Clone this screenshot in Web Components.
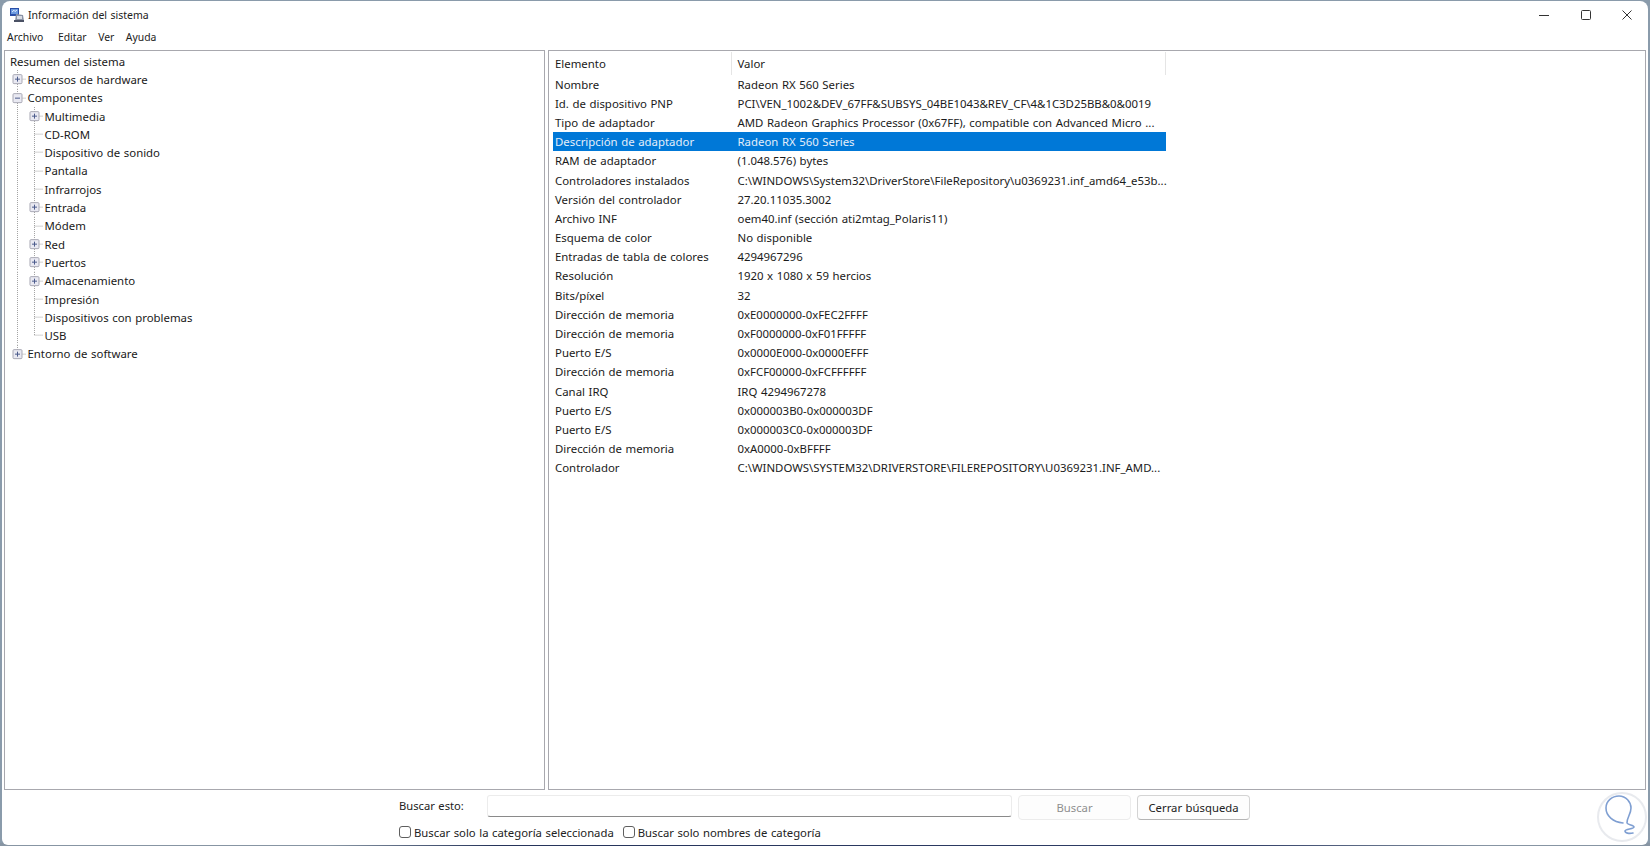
<!DOCTYPE html>
<html lang="es">
<head>
<meta charset="utf-8">
<title>Información del sistema</title>
<style>
  html, body { height: 100%; }
  body {
    margin: 0;
    overflow: hidden;
    background: linear-gradient(90deg, #8795a3 0, #8795a3 20%, #26345a 30%, #2f3d66 75%, #8795a3 90%) bottom / 100% 3px no-repeat, #8a9bab;
    font: 11.4px "Noto Sans", "Open Sans", sans-serif;
    word-spacing: .6px;
    color: #1a1a1a;
  }
</style>
</head>
<body>
<app-window>
  <title-bar slot="title">Información del sistema</title-bar>
  <menu-bar slot="menu" items="Archivo,Editar,Ver,Ayuda"></menu-bar>
  <tree-view slot="tree"></tree-view>
  <list-view slot="list"></list-view>
  <search-bar slot="search"></search-bar>
  <water-mark slot="mark"></water-mark>
</app-window>

<script>
class AppWindow extends HTMLElement {
  constructor() {
    super();
    this.attachShadow({ mode: 'open' });
    this.shadowRoot.innerHTML = `
      <style>
        :host {
          display: flex;
          flex-direction: column;
          position: relative;
          box-sizing: border-box;
          height: 844.5px;
          padding: 1px 2px 0 1.5px;
        }
        main {
          flex: 1;
          display: flex;
          flex-direction: column;
          min-height: 0;
          background: #fff;
          border-radius: 8px 8px 6px 6px;
        }
        #panes {
          flex: 1;
          min-height: 0;
          display: grid;
          grid-template-columns: 541px 1fr;
          column-gap: 3px;
          padding: 0 2px 0 2.5px;
        }
      </style>
      <main>
        <slot name="title"></slot>
        <slot name="menu"></slot>
        <div id="panes">
          <slot name="tree"></slot>
          <slot name="list"></slot>
        </div>
        <slot name="search"></slot>
      </main>
      <slot name="mark"></slot>
    `;
  }
}

class TitleBar extends HTMLElement {
  constructor() {
    super();
    this.attachShadow({ mode: 'open' });
    this.shadowRoot.innerHTML = `
      <style>
        :host {
          display: flex;
          align-items: center;
          height: 27px;
          padding-left: 7.5px;
          font-size: 10.5px;
          color: #222;
        }
        #logo { width: 16px; height: 16px; margin-right: 3px; flex: none; }
        #text { flex: 1; }
        #controls { display: flex; }
        #controls div { width: 41.5px; height: 27px; display: flex; align-items: center; justify-content: center; }
        #controls svg { width: 12px; height: 12px; fill: none; stroke: #333; stroke-width: 1; }
      </style>
      <svg id="logo" viewBox="0 0 16 16">
        <rect x="1" y="1" width="9" height="8" fill="#2a4fa8"/>
        <rect x="2" y="2" width="7" height="5" fill="#6d9be0"/>
        <path d="M3 5 L5 3.2 L6 4.6 L8 3" stroke="#e9f1ff" stroke-width=".9" fill="none"/>
        <path d="M7 7 L14 8 L15 14 L6 14 Z" fill="#8b93a6"/>
        <rect x="8" y="9" width="5" height="3" fill="#d8dce4"/>
        <rect x="5" y="13" width="10" height="2" fill="#4a5164"/>
      </svg>
      <span id="text"><slot></slot></span>
      <div id="controls">
        <div><svg viewBox="0 0 12 12"><path d="M1 6.5H11"/></svg></div>
        <div><svg viewBox="0 0 12 12"><rect x="1.5" y="1.5" width="9" height="9" rx="1"/></svg></div>
        <div><svg viewBox="0 0 12 12"><path d="M1.5 1.5L10.5 10.5M10.5 1.5L1.5 10.5"/></svg></div>
      </div>
    `;
  }
}

class MenuBar extends HTMLElement {
  constructor() {
    super();
    this.attachShadow({ mode: 'open' });
    const items = this.getAttribute('items').split(',');
    this.shadowRoot.innerHTML = `
      <style>
        :host {
          display: flex;
          align-items: center;
          box-sizing: border-box;
          height: 22px;
          padding: 0 0 5px 5.5px;
          gap: 11.5px;
          font-size: 10.4px;
          color: #222;
        }
        span:first-of-type { margin-right: 3px; }
      </style>
      ${items.map(item => `<span>${item}</span>`).join('')}
    `;
  }
}

const TREE = [
  { label: 'Resumen del sistema', level: -1, cont: [] },
  { label: 'Recursos de hardware', level: 0, box: 'plus', cont: [0] },
  { label: 'Componentes', level: 0, box: 'minus', cont: [0] },
  { label: 'Multimedia', level: 1, box: 'plus', cont: [0, 1] },
  { label: 'CD-ROM', level: 1, cont: [0, 1] },
  { label: 'Dispositivo de sonido', level: 1, cont: [0, 1] },
  { label: 'Pantalla', level: 1, cont: [0, 1] },
  { label: 'Infrarrojos', level: 1, cont: [0, 1] },
  { label: 'Entrada', level: 1, box: 'plus', cont: [0, 1] },
  { label: 'Módem', level: 1, cont: [0, 1] },
  { label: 'Red', level: 1, box: 'plus', cont: [0, 1] },
  { label: 'Puertos', level: 1, box: 'plus', cont: [0, 1] },
  { label: 'Almacenamiento', level: 1, box: 'plus', cont: [0, 1] },
  { label: 'Impresión', level: 1, cont: [0, 1] },
  { label: 'Dispositivos con problemas', level: 1, cont: [0, 1] },
  { label: 'USB', level: 1, cont: [0], last: true },
  { label: 'Entorno de software', level: 0, box: 'plus', cont: [], last: true },
];

class TreeRow extends HTMLElement {
  constructor() {
    super();
    this.attachShadow({ mode: 'open' });
  }

  set data(node) {
    const gutter = 17 * (node.level + 1);
    const h = 18.3;
    const mid = h / 2;
    let marks = '';
    for (const col of node.cont) {
      const x = 8.5 + 17 * col;
      marks += `<path d="M${x} 0V${h}" class="dot"/>`;
    }
    if (node.level >= 0) {
      const x = 8.5 + 17 * node.level;
      if (node.last) marks += `<path d="M${x} 0V${mid}" class="dot"/>`;
      marks += `<path d="M${x} ${mid}H${x + 9}" class="dot"/>`;
      if (node.box) {
        const bar = node.box === 'plus' ? `<path d="M${x} ${mid - 2.5}V${mid + 2.5}" class="sign"/>` : '';
        marks += `<rect x="${x - 4.5}" y="${mid - 4.5}" width="9" height="9" rx="1" class="box"/>
          <path d="M${x - 2.5} ${mid}H${x + 2.5}" class="sign"/>${bar}`;
      }
    }
    this.shadowRoot.innerHTML = `
      <style>
        :host { display: flex; height: ${h}px; align-items: center; white-space: nowrap; }
        svg { flex: none; display: block; }
        .dot { stroke: #a3a3a3; stroke-width: 1; stroke-dasharray: 1 1; fill: none; }
        .box { fill: #e9e9f2; stroke: #a9a9b5; stroke-width: 1; }
        .sign { stroke: #4a5a8c; stroke-width: 1; fill: none; }
        span { margin-left: ${node.level >= 0 ? 1.5 : 1}px; }
      </style>
      ${node.level >= 0 ? `<svg width="${gutter}" height="${h}" viewBox="0 0 ${gutter} ${h}">${marks}</svg>` : ''}
      <span>${node.label}</span>
    `;
  }
}

class TreeView extends HTMLElement {
  constructor() {
    super();
    this.attachShadow({ mode: 'open' });
    this.shadowRoot.innerHTML = `
      <style>
        :host {
          display: block;
          box-sizing: border-box;
          height: 100%;
          background: #fff;
          border: 1.5px solid #a8a8ae;
          padding: 1px 0 0 4px;
          overflow: hidden;
        }
      </style>
    `;
    for (const node of TREE) {
      const row = document.createElement('tree-row');
      row.data = node;
      this.shadowRoot.append(row);
    }
  }
}

const ROWS = [
  ['Nombre', 'Radeon RX 560 Series'],
  ['Id. de dispositivo PNP', 'PCI\\VEN_1002&DEV_67FF&SUBSYS_04BE1043&REV_CF\\4&1C3D25BB&0&0019'],
  ['Tipo de adaptador', 'AMD Radeon Graphics Processor (0x67FF), compatible con Advanced Micro ...'],
  ['Descripción de adaptador', 'Radeon RX 560 Series', true],
  ['RAM de adaptador', '(1.048.576) bytes'],
  ['Controladores instalados', 'C:\\WINDOWS\\System32\\DriverStore\\FileRepository\\u0369231.inf_amd64_e53b...'],
  ['Versión del controlador', '27.20.11035.3002'],
  ['Archivo INF', 'oem40.inf (sección ati2mtag_Polaris11)'],
  ['Esquema de color', 'No disponible'],
  ['Entradas de tabla de colores', '4294967296'],
  ['Resolución', '1920 x 1080 x 59 hercios'],
  ['Bits/píxel', '32'],
  ['Dirección de memoria', '0xE0000000-0xFEC2FFFF'],
  ['Dirección de memoria', '0xF0000000-0xF01FFFFF'],
  ['Puerto E/S', '0x0000E000-0x0000EFFF'],
  ['Dirección de memoria', '0xFCF00000-0xFCFFFFFF'],
  ['Canal IRQ', 'IRQ 4294967278'],
  ['Puerto E/S', '0x000003B0-0x000003DF'],
  ['Puerto E/S', '0x000003C0-0x000003DF'],
  ['Dirección de memoria', '0xA0000-0xBFFFF'],
  ['Controlador', 'C:\\WINDOWS\\SYSTEM32\\DRIVERSTORE\\FILEREPOSITORY\\U0369231.INF_AMD...'],
];

class ListView extends HTMLElement {
  constructor() {
    super();
    this.attachShadow({ mode: 'open' });
    const esc = text => text.replace(/&/g, '&amp;');
    this.shadowRoot.innerHTML = `
      <style>
        :host {
          display: block;
          box-sizing: border-box;
          height: 100%;
          background: #fff;
          border: 1.5px solid #a8a8ae;
          padding: 1px 0 0 4px;
          overflow: hidden;
        }
        #grid { width: 613px; }
        .row {
          display: grid;
          grid-template-columns: 178.5px 1fr;
          height: 19.2px;
          align-items: center;
          white-space: nowrap;
        }
        .row span { padding-left: 2px; }
        .row.head { height: 22.5px; }
        .row.head span { height: 100%; display: flex; align-items: center; border-right: 1px solid #e5e5e5; box-sizing: border-box; }
        .row span + span { padding-left: 6px; }
        .row.sel { background: #0078d7; color: #e4eefa; }
      </style>
      <div id="grid">
        <div class="row head"><span>Elemento</span><span>Valor</span></div>
        ${ROWS.map(([key, val, sel]) => `<div class="row${sel ? ' sel' : ''}"><span>${key}</span><span>${esc(val)}</span></div>`).join('')}
      </div>
    `;
  }
}

class SearchBar extends HTMLElement {
  constructor() {
    super();
    this.attachShadow({ mode: 'open' });
    this.shadowRoot.innerHTML = `
      <style>
        :host {
          display: block;
          height: 54.5px;
          box-sizing: border-box;
          padding: 5px 0 0 397.5px;
          font-size: 11.3px;
          color: #222;
        }
        #top { display: flex; align-items: center; height: 24px; }
        #label { width: 88px; margin-top: -4px; font-size: 11.2px; }
        #input {
          width: 525px;
          height: 22px;
          box-sizing: border-box;
          margin-top: -2px;
          border: 1px solid #ececec;
          border-bottom: 1px solid #8a8a8a;
          border-radius: 3px;
        }
        .btn {
          width: 113px;
          height: 25px;
          box-sizing: border-box;
          display: flex;
          align-items: center;
          justify-content: center;
          border: 1px solid #d4d4d4;
          border-bottom-color: #b5b5b5;
          border-radius: 4px;
          margin-left: 6px;
          background: #fdfdfd;
        }
        .btn.off { color: #8f8f8f; border-color: #ececec; }
        #bottom { display: flex; align-items: center; margin-top: 4px; height: 18px; gap: 9px; }
        label { display: flex; align-items: center; gap: 3px; }
        i {
          width: 12px;
          height: 12px;
          box-sizing: border-box;
          border: 1px solid #5f5f5f;
          border-radius: 3px;
          display: block;
        }
      </style>
      <div id="top">
        <span id="label">Buscar esto:</span>
        <div id="input"></div>
        <div class="btn off">Buscar</div>
        <div class="btn">Cerrar búsqueda</div>
      </div>
      <div id="bottom">
        <label><i></i>Buscar solo la categoría seleccionada</label>
        <label><i></i>Buscar solo nombres de categoría</label>
      </div>
    `;
  }
}

class WaterMark extends HTMLElement {
  constructor() {
    super();
    this.attachShadow({ mode: 'open' });
    this.shadowRoot.innerHTML = `
      <style>
        :host { position: absolute; left: 1596px; top: 790px; width: 54px; height: 54px; pointer-events: none; }
        svg { display: block; fill: none; }
      </style>
      <svg width="54" height="54" viewBox="0 0 54 54">
        <circle cx="26" cy="27" r="24" stroke="#e8eaee" stroke-width="2"/>
        <path d="M27 33C17 32 10 26 10 18C10 11 16 6 23 6C30 6 35 12 35 18C35 24 31 27 31 33C32 35 38 35 38 37C38 39 29 39 29 41C29 43 33 44 37 43" stroke="#7f9fd2" stroke-width="1.6" stroke-linecap="round"/>
      </svg>
    `;
  }
}

customElements.define('app-window', AppWindow);
customElements.define('title-bar', TitleBar);
customElements.define('menu-bar', MenuBar);
customElements.define('tree-row', TreeRow);
customElements.define('tree-view', TreeView);
customElements.define('list-view', ListView);
customElements.define('search-bar', SearchBar);
customElements.define('water-mark', WaterMark);
</script>
</body>
</html>
